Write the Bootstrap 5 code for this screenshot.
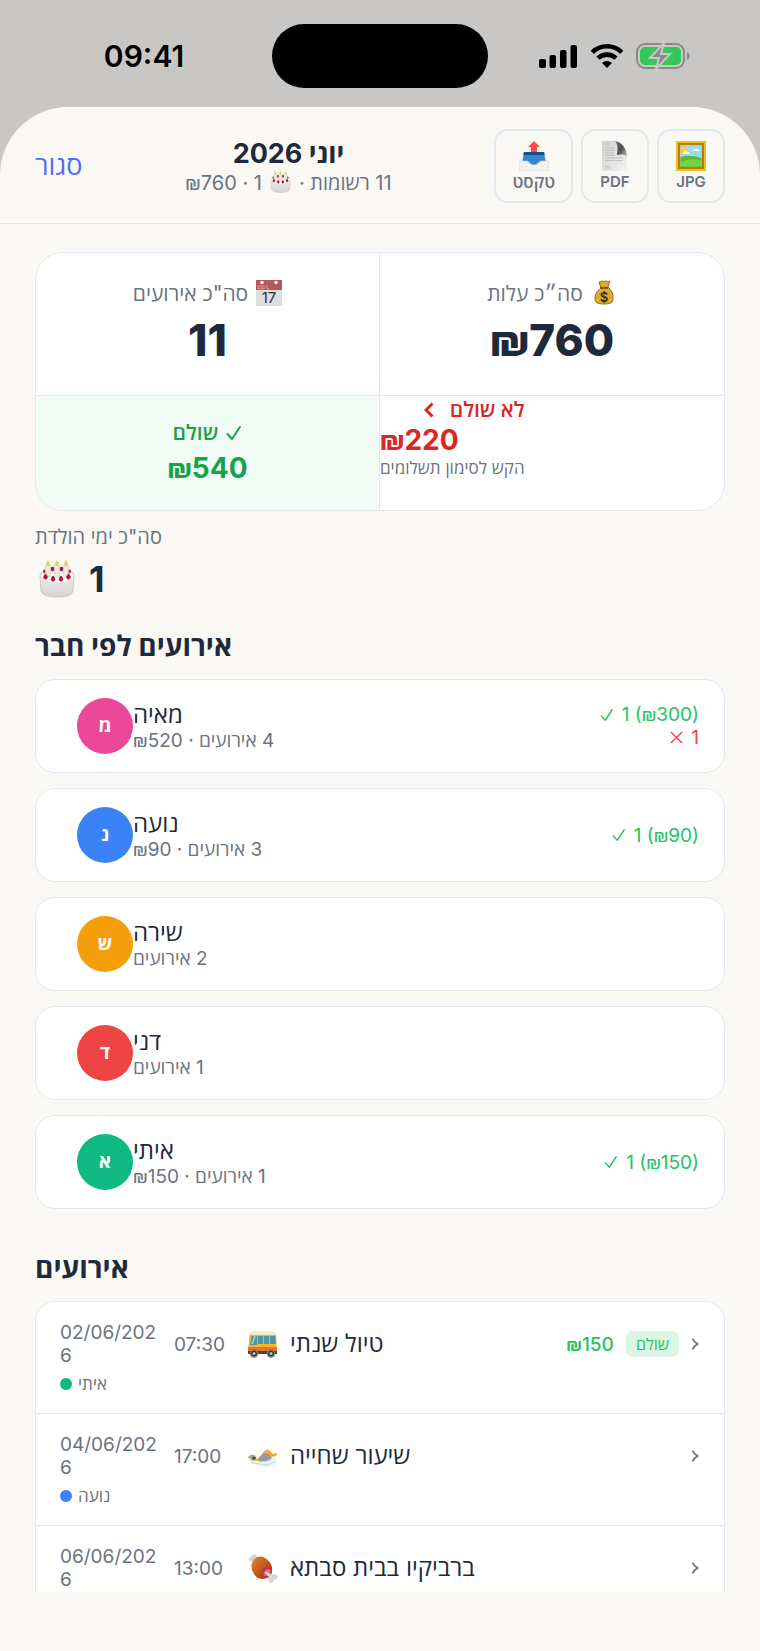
<!DOCTYPE html>
<html lang="he">
<head>
<meta charset="utf-8">
<meta name="viewport" content="width=device-width, initial-scale=1">
<title>יוני 2026</title>
<link href="https://cdn.jsdelivr.net/npm/bootstrap@5.3.0/dist/css/bootstrap.min.css" rel="stylesheet">
<style>
:root{--ink:#1e293b;--muted:#6b7280;--line:#e2e8f0;--paper:#faf8f5}
body{font-family:Inter,"Open Sans",sans-serif;color:var(--ink);background:#c8c7c5;line-height:1.2}
.screen{height:100vh}
.status{display:grid;grid-template-columns:1fr auto 1fr;align-items:center;height:107px;padding:24px 0 19px}
.clock{font-size:30px;font-weight:600;color:#000;padding-left:16px}
.indicators{gap:12px;padding-right:20px}
.island{width:216px;height:64px;background:#000}
.sheet{background:var(--paper);border-radius:68px 68px 0 0;padding-bottom:59px;min-height:0}
.topbar{height:117px;padding:2px 35px 0;border-bottom:1px solid var(--line)}
.close-link{font-size:27px;color:#4f6ef7}
.month{font-size:27px;line-height:34px;font-weight:700;margin:0}
.t17{font-size:17px;line-height:22px}
.t19{font-size:19px;line-height:23px}
.t20{font-size:20px;line-height:24px}
.t21{font-size:21px;line-height:28px}
.t24{font-size:24px;line-height:28px}
.t28{font-size:28px;line-height:36px;font-weight:700}
.dim{color:var(--muted)}
.nis{font-family:Roboto,sans-serif}
.export{border:2px solid var(--line);border-radius:14px;background:transparent;height:74px;min-width:68px;padding:10px 16px 0;color:var(--muted);font-size:15px;font-weight:600;line-height:22px}
.export [lang=he]{font-size:17px}
.content{padding:28px 35px 0;overflow-y:auto;scrollbar-width:none}
.content::-webkit-scrollbar{display:none}
.tile{background:#fff;border:1px solid var(--line);border-radius:20px}
.totals{border-radius:28px;overflow:hidden}
.totals .col-6{border-color:var(--line)!important}
.sum-top{height:143px;padding-top:27px}
.sum-low{height:114px}
.huge{font-size:44px;line-height:64px;font-weight:800}
.paid{background:#f2fcf6;color:#16a34a;padding-top:2px}
.paid .t28{line-height:42px}
.due{color:#dc2626}
.due .t28{line-height:32px}
.ok{color:#22c55e}
.bad{color:#ef4444}
.birthdays{margin-top:14px}
.count{font-size:36px;line-height:44px;font-weight:700;gap:14px}
.section-title{margin:27px 0 15px}
.section-title.far{margin-top:41px}
.members{gap:15px}
.member{height:94px;padding:0 25px 0 41px}
.avatar{width:56px;height:56px;color:#fff;font-size:19px;font-weight:700}
.events{border-radius:20px 20px 0 0;border-bottom:0}
.event{min-height:112px;padding:19px 25px 0 24px;border-bottom:1px solid var(--line)}
.event-main{gap:12px}
.date{width:102px;word-break:break-all}
.hour{width:62px}
.person{margin-top:6px;gap:6px}
.dot{width:12px;height:12px}
.tag{background:#dcf6e6;border-radius:7px;font-size:16px;line-height:26px;padding:0 10px}
.c-pink{background:#ec4899}.c-blue{background:#3b82f6}.c-amber{background:#f59e0b}.c-red{background:#ef4444}.c-green{background:#10b981}
svg{flex:none;display:block}
</style>
</head>
<body>
<svg width="0" height="0" class="position-absolute" aria-hidden="true">
<defs>
<linearGradient id="cakeG" x1="0" y1="0" x2="0" y2="1"><stop offset="0" stop-color="#f4f3f1"/><stop offset="1" stop-color="#d6d4d0"/></linearGradient>
<linearGradient id="pageG" x1="0" y1="0" x2="1" y2="1"><stop offset="0" stop-color="#cfcfcf"/><stop offset="1" stop-color="#f3f3f3"/></linearGradient>
<linearGradient id="curlG" x1="0" y1="0" x2="1" y2="1"><stop offset="0" stop-color="#777"/><stop offset=".5" stop-color="#4a4a4a"/><stop offset="1" stop-color="#ccc"/></linearGradient>
<linearGradient id="meatG" x1="0" y1="0" x2="1" y2="1"><stop offset="0" stop-color="#e08a3c"/><stop offset=".5" stop-color="#c65a16"/><stop offset="1" stop-color="#8c3408"/></linearGradient>
<symbol id="cake" viewBox="0 0 36 38">
<path d="M1 16c0-5 7-7 17-7s17 2 17 7l-1 15c-1 4-7 6-16 6S3 35 2 31z" fill="url(#cakeG)" stroke="#c4c1bb" stroke-width=".8"/>
<ellipse cx="18" cy="16" rx="16" ry="6.500" fill="#fcfbfa"/>
<g fill="#b10f35"><circle cx="6" cy="11.500" r="2"/><circle cx="13.500" cy="9" r="2.200"/><circle cx="22.500" cy="9" r="2.200"/><circle cx="30" cy="11.500" r="2"/></g>
<g fill="#ebe8de" stroke="#c9c4b5" stroke-width=".5"><rect x="6.300" y="5" width="5.400" height="12" rx="1"/><rect x="15.300" y="5" width="5.400" height="12" rx="1"/><rect x="24.300" y="5" width="5.400" height="12" rx="1"/></g>
<path d="M9 0c3 4 2 6 0 6s-3-2 0-6zM18 0c3 4 2 6 0 6s-3-2 0-6zM27 0c3 4 2 6 0 6s-3-2 0-6z" fill="#ecd14f"/>
<path d="M6.500 14c2 2 2.500 5 0 5s-2-3 0-5zM14 16c2 2 2.500 5 0 5s-2-3 0-5zM22 16c2 2 2.500 5 0 5s-2-3 0-5zM29.500 14c2 2 2.500 5 0 5s-2-3 0-5z" fill="#b10f35" stroke="#b10f35"/>
</symbol>
<symbol id="check" viewBox="0 0 16 16"><path d="M1.500 9l4.500 5L14 2" fill="none" stroke="currentColor" stroke-linecap="round" stroke-linejoin="round"/></symbol>
<symbol id="cross" viewBox="0 0 14 14"><path d="M1.500 1.500l11 11m0-11l-11 11" fill="none" stroke="currentColor" stroke-width="1.500" stroke-linecap="round"/></symbol>
<symbol id="next" viewBox="0 0 8 12"><path d="M1.500 .5Q3 4 6.500 6 3 8 1.500 11.500" fill="none" stroke="#6b7280" stroke-width="1.800"/></symbol>
</defs>
</svg>
<div class="screen d-flex flex-column">
<header class="status">
<div class="text-center clock">09:41</div>
<div class="island rounded-pill"></div>
<div class="indicators d-flex justify-content-center align-items-center">
<svg width="39" height="26" viewBox="0 0 39 26"><rect x="0" y="16" width="7" height="9" rx="2"/><rect x="10.500" y="12" width="6.500" height="13" rx="2"/><rect x="21" y="7" width="6.500" height="18" rx="2"/><rect x="31.500" y="2" width="6.500" height="23" rx="2"/></svg>
<svg width="34" height="26" viewBox="0 0 34 26"><g fill="none" stroke="#000" stroke-width="4.600"><path d="M2.300 9.300a21 21 0 0 1 29.400 0"/><path d="M8 15.200a13 13 0 0 1 18 0"/></g><path d="M17 25l-5-5a7.200 7.200 0 0 1 10 0z"/></svg>
<svg width="54" height="26" viewBox="0 0 54 26"><rect x="1" y="1" width="47" height="24" rx="8" fill="none" stroke="#8b8a89" stroke-width="2"/><path d="M51 9c3.500 1 3.500 7 0 8z" fill="#8b8a89"/><rect x="4" y="4" width="41" height="18" rx="5" fill="#34c759"/><path d="M28 0L14 15h9l-3 11L34 11h-9z" fill="#8b8a89" stroke="#c8c7c5" stroke-width="2"/></svg>
</div>
</header>
<main class="sheet flex-grow-1 d-flex flex-column">
<div class="topbar d-flex align-items-center justify-content-between flex-shrink-0">
<a href="#" class="close-link text-decoration-none">סגור</a>
<div class="text-center">
<h1 class="month" dir="rtl">יוני 2026</h1>
<div class="t20 dim d-flex gap-1 justify-content-center" dir="rtl"><span>11 רשומות ·</span><svg class="mx-1" width="21" height="22"><use href="#cake"/></svg><span>1 · <span class="nis">₪</span>760</span></div>
</div>
<div class="d-flex gap-2">
<button type="button" class="export d-flex flex-column align-items-center">
<svg width="30" height="30" viewBox="0 0 30 30"><path d="M4 11h22l3 12H1z" fill="#e9e7e3"/><path d="M5 11h20l2 13H3z" fill="#2f86d6"/><path d="M5 11h20l.5 3h-21z" fill="#174f88"/><path d="M15 0l6 6h-3v5h-6V6H9z" fill="#fb4e45"/><path d="M0 20h8c2 0 3 4 7 4s5-4 7-4h8v8q0 2-2 2H2q-2 0-2-2z" fill="#f3f2ef" stroke="#d5d2cc" stroke-width=".6"/></svg>
<span lang="he">טקסט</span></button>
<button type="button" class="export d-flex flex-column align-items-center">
<svg width="30" height="30" viewBox="0 0 30 30"><path d="M2 0h14l11 14v16H2z" fill="url(#pageG)"/><path d="M15 0c3 3 3 9 2 14 4-1 8-1 10 2C27 8 22 1 15 0z" fill="url(#curlG)"/><g stroke="#c2c2c2"><path d="M5 3h5M5 7h9M5 9.500h9M5 12h9M5 14.500h9M5 17h18M5 19.500h18M5 25h6M5 27h6"/></g></svg>
<span>PDF</span></button>
<button type="button" class="export d-flex flex-column align-items-center">
<svg width="30" height="30" viewBox="0 0 30 30"><path d="M0 0h30v30H0z" fill="#efbf1d"/><path d="M2 2h26v26H2zM4 4v22h22V4z" fill="#b97c08" fill-rule="evenodd"/><path d="M4.500 4.500h21v21h-21z" fill="#9adcf0"/><path d="M4.500 16q8-3 21 1v9h-21z" fill="#58bb3b"/><path d="M4.500 21q10-5 21-1v5.500h-21z" fill="#7ad23e"/><circle cx="8.500" cy="9" r="3.500" fill="#ffcf2d"/><path d="M7 12q2-3 4-1 3 0 3 2H7zM17 9q3-3 7 1h-7z" fill="#fff"/></svg>
<span>JPG</span></button>
</div>
</div>
<div class="content flex-grow-1">
<section class="tile totals">
<div class="row g-0 text-center">
<div class="col-6 sum-top border-end border-bottom">
<div class="t21 dim d-flex justify-content-center gap-2" dir="rtl"><svg width="26" height="26" viewBox="0 0 26 26"><path d="M0 0h26v26H0z" fill="#dedede"/><path d="M0 0h26v10H0z" fill="#b25a5a"/><path d="M2 5v4h2V5m2 0v4h2V5m3 0v4h2" fill="none" stroke="#d79a9a"/><circle cx="6" cy="2.500" r="1.700" fill="#fff"/><circle cx="20" cy="2.500" r="1.700" fill="#fff"/><text x="13" y="23" text-anchor="middle" font-size="15" fill="#333">17</text></svg><span>סה"כ אירועים</span></div>
<div class="huge">11</div>
</div>
<div class="col-6 sum-top border-bottom">
<div class="t21 dim d-flex justify-content-center gap-2" dir="rtl"><svg width="26" height="26" viewBox="0 0 26 26"><path d="M8 2q2 0 3-1 2 1 4 0 2 1 4 0l-2 6q6 5 5 13 0 4-9 4t-9-4Q3 13 10 8z" fill="#d9ab35" stroke="#9d7219"/><path d="M9 8h8" stroke="#8f4d20" stroke-width="2"/><text x="13" y="22" text-anchor="middle" font-size="13" font-weight="600" fill="#3c2b0a">$</text></svg><span>סה״כ עלות</span></div>
<div class="huge"><span class="nis">₪</span>760</div>
</div>
<div class="col-6 sum-low border-end paid d-flex flex-column justify-content-center">
<div class="t21 fw-semibold d-flex justify-content-center align-items-center gap-2" dir="rtl"><svg width="16" height="16" stroke-width="2"><use href="#check"/></svg><span>שולם</span></div>
<div class="t28"><span class="nis">₪</span>540</div>
</div>
<div class="col-6 sum-low due d-flex">
<div class="text-start">
<div class="t21 fw-semibold d-flex align-items-center gap-3" dir="rtl"><span>לא שולם</span><svg width="10" height="16" viewBox="0 0 10 16"><path d="M8.500 1.500L2 8l6.500 6.500" fill="none" stroke="currentColor" stroke-width="3"/></svg></div>
<div class="t28"><span class="nis">₪</span>220</div>
<div class="t17 dim">הקש לסימון תשלומים</div>
</div>
</div>
</div>
</section>
<div class="t20 dim birthdays">סה"כ ימי הולדת</div>
<div class="count d-flex align-items-center mt-2 ps-1"><svg width="36" height="38"><use href="#cake"/></svg><span>1</span></div>
<h2 class="t28 section-title">אירועים לפי חבר</h2>
<div class="members d-flex flex-column">
<div class="tile member d-flex align-items-center"><div class="avatar c-pink rounded-circle d-flex align-items-center justify-content-center">מ</div><div class="flex-grow-1"><div class="t24">מאיה</div><div class="t19 dim"><bdi dir="rtl">4 אירועים · <span class="nis">₪</span>520</bdi></div></div><div class="t19"><div class="ok d-flex align-items-center gap-2"><svg width="14" height="14" stroke-width="1.600"><use href="#check"/></svg><span>1 (<span class="nis">₪</span>300)</span></div><div class="bad d-flex align-items-center justify-content-end gap-2"><svg width="13" height="13"><use href="#cross"/></svg><span>1</span></div></div></div>
<div class="tile member d-flex align-items-center"><div class="avatar c-blue rounded-circle d-flex align-items-center justify-content-center">נ</div><div class="flex-grow-1"><div class="t24">נועה</div><div class="t19 dim"><bdi dir="rtl">3 אירועים · <span class="nis">₪</span>90</bdi></div></div><div class="t19 ok d-flex align-items-center gap-2"><svg width="14" height="14" stroke-width="1.600"><use href="#check"/></svg><span>1 (<span class="nis">₪</span>90)</span></div></div>
<div class="tile member d-flex align-items-center"><div class="avatar c-amber rounded-circle d-flex align-items-center justify-content-center">ש</div><div><div class="t24">שירה</div><div class="t19 dim"><bdi dir="rtl">2 אירועים</bdi></div></div></div>
<div class="tile member d-flex align-items-center"><div class="avatar c-red rounded-circle d-flex align-items-center justify-content-center">ד</div><div><div class="t24">דני</div><div class="t19 dim"><bdi dir="rtl">1 אירועים</bdi></div></div></div>
<div class="tile member d-flex align-items-center"><div class="avatar c-green rounded-circle d-flex align-items-center justify-content-center">א</div><div class="flex-grow-1"><div class="t24">איתי</div><div class="t19 dim"><bdi dir="rtl">1 אירועים · <span class="nis">₪</span>150</bdi></div></div><div class="t19 ok d-flex align-items-center gap-2"><svg width="14" height="14" stroke-width="1.600"><use href="#check"/></svg><span>1 (<span class="nis">₪</span>150)</span></div></div>
</div>
<h2 class="t28 section-title far">אירועים</h2>
<div class="tile events">
<div class="event">
<div class="event-main d-flex align-items-center"><div class="date t19 dim">02/06/2026</div><div class="hour t19 dim">07:30</div>
<svg width="30" height="30" viewBox="0 0 30 30"><path d="M1 8l1-4q0-2 4-2h18q3 0 4 2l1 5H1z" fill="#f6e9c4"/><path d="M1.500 6h26.500l1 16q0 2-2 2H2q-2 0-2-2l1-9z" fill="#fbb51c"/><path d="M0 18h29v4H0z" fill="#f0731f"/><path d="M0 22h29v3H0z" fill="#41454b"/><path d="M3.500 7H9v9H2zM10 7h5v8h-5zM16 7h5v8h-5zM22 7h5l1 8h-6z" fill="#4f95a6"/><path d="M6 7h2l-3 8H3z" fill="#95c8cf"/><g fill="#2f3338" stroke="#777c82" stroke-width="1.500"><circle cx="6" cy="24.500" r="3.500"/><circle cx="23" cy="24.500" r="3.500"/></g><g fill="#bcc0c5"><circle cx="6" cy="24.500" r="1.500"/><circle cx="23" cy="24.500" r="1.500"/></g></svg>
<div class="t24 flex-grow-1">טיול שנתי</div><div class="t19 ok fw-medium"><span class="nis">₪</span>150</div><span class="tag ok">שולם</span><svg width="8" height="12"><use href="#next"/></svg></div>
<div class="person d-flex align-items-center t17 dim"><span class="dot c-green rounded-circle"></span>איתי</div>
</div>
<div class="event">
<div class="event-main d-flex align-items-center"><div class="date t19 dim">04/06/2026</div><div class="hour t19 dim">17:00</div>
<svg width="30" height="30" viewBox="0 0 30 30"><path d="M9 19l7-8 4-1 4 7-4 4h-9z" fill="#9b9a9c"/><path d="M15 12q3-5 6-3l4 4 3-1q2 1 0 3-4 2-8-2z" fill="#f5ac2a"/><path d="M2 16q4-2 8 2l2 3q-6 2-10-2z" fill="#f3b53a"/><path d="M0 16q3-4 8-1l-2 3-6-1z" fill="#a9a49c"/><path d="M5 15.500l3 1-1 2.500-3-1z" fill="#284a66"/><path d="M1 20q7-1 12 1 8-1 14-4 3 1 2 4-4 5-12 5T1 20z" fill="#eaf4f8"/><path d="M3 22q8 0 12 2 6 0 12-3M12 21q8 0 13-4" fill="none" stroke="#bcdbe6"/></svg>
<div class="t24 flex-grow-1">שיעור שחייה</div><svg width="8" height="12"><use href="#next"/></svg></div>
<div class="person d-flex align-items-center t17 dim"><span class="dot c-blue rounded-circle"></span>נועה</div>
</div>
<div class="event">
<div class="event-main d-flex align-items-center"><div class="date t19 dim">06/06/2026</div><div class="hour t19 dim">13:00</div>
<svg width="30" height="30" viewBox="0 0 30 30"><path d="M8 9L5 8Q2 10 1 7q-1-2 2-3 2-4 5-2 2 2 2 5z" fill="#d8d2c8"/><path d="M4 10Q7 2 15 4q7 3 9 10 1 9-5 11-9 3-13-4Q2 15 4 10z" fill="url(#meatG)"/><ellipse cx="18.500" cy="19" rx="4.500" ry="6.500" transform="rotate(45 18.500 19)" fill="#c9304a"/><ellipse cx="19" cy="19.500" rx="2.500" ry="4" transform="rotate(45 19 19.500)" fill="#e46b78"/><path d="M18 18l6 4q4-1 5 1 1 3-3 3-1 4-4 3-2-1-1-5l-4-4z" fill="#ded9cf" stroke="#b5aea2" stroke-width=".5"/></svg>
<div class="t24 flex-grow-1">ברביקיו בבית סבתא</div><svg width="8" height="12"><use href="#next"/></svg></div>
</div>
</div>
</div>
</main>
</div>
<script src="https://cdn.jsdelivr.net/npm/bootstrap@5.3.0/dist/js/bootstrap.bundle.min.js"></script>
</body>
</html>
